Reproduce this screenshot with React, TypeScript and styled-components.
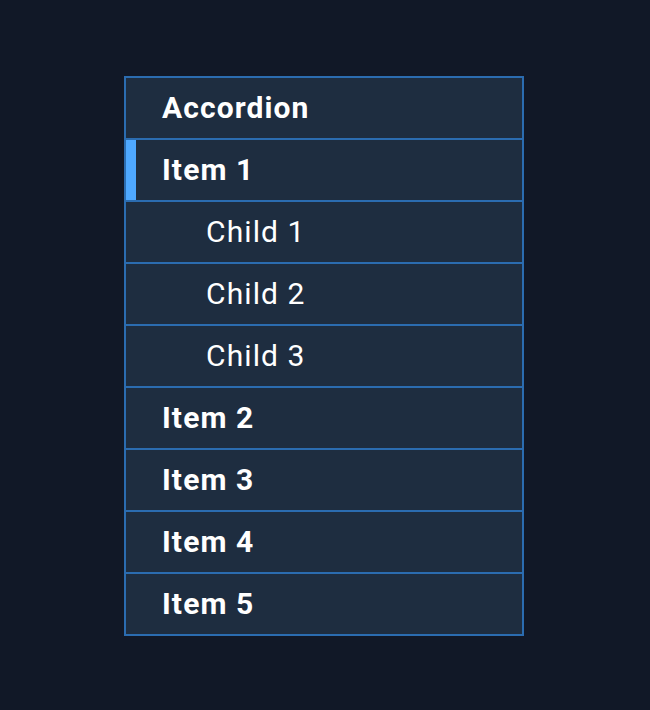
import React from 'react'
import styled, { createGlobalStyle } from 'styled-components'

const Global = createGlobalStyle`
  html, body {
    margin: 0;
    padding: 0;
    background: #111827;
  }
  body {
    font-family: Roboto, "Liberation Sans", sans-serif;
  }
`

const Page = styled.div`
  display: flex;
  justify-content: flex-start;
  align-items: flex-start;
  width: 650px;
  height: 710px;
  padding: 76px 0 0 124px;
  box-sizing: border-box;
`

const Panel = styled.div`
  width: 400px;
  box-sizing: border-box;
  border-left: 2px solid #2b6cb0;
  border-right: 2px solid #2b6cb0;
  border-bottom: 2px solid #2b6cb0;
  background: #1e2d40;
  display: flex;
  flex-direction: column;
`

const Row = styled.div<{ $level: number; $active?: boolean }>`
  position: relative;
  height: 60px;
  box-sizing: border-box;
  border-top: 2px solid #2b6cb0;
  display: flex;
  align-items: center;
  padding-left: ${(p) => (p.$level ? 80 : 36)}px;
  padding-bottom: 2px;
  color: #ffffff;
  font-size: 30px;
  letter-spacing: 1.1px;
  font-weight: ${(p) => (p.$level ? 400 : 700)};
  background: #1e2d40;
  height: 62px;

  &::before {
    content: '';
    display: ${(p) => (p.$active ? 'block' : 'none')};
    position: absolute;
    left: 0;
    top: 0;
    width: 10px;
    height: 60px;
    background: #4ea8ff;
  }
`

const rows: { label: string; level: number; active?: boolean }[] = [
  { label: 'Accordion', level: 0 },
  { label: 'Item 1', level: 0, active: true },
  { label: 'Child 1', level: 1 },
  { label: 'Child 2', level: 1 },
  { label: 'Child 3', level: 1 },
  { label: 'Item 2', level: 0 },
  { label: 'Item 3', level: 0 },
  { label: 'Item 4', level: 0 },
  { label: 'Item 5', level: 0 },
]

export default function App() {
  return (
    <>
      <Global />
      <Page>
        <Panel>
          {rows.map((r) => (
            <Row key={r.label} $level={r.level} $active={r.active}>
              {r.label}
            </Row>
          ))}
        </Panel>
      </Page>
    </>
  )
}
